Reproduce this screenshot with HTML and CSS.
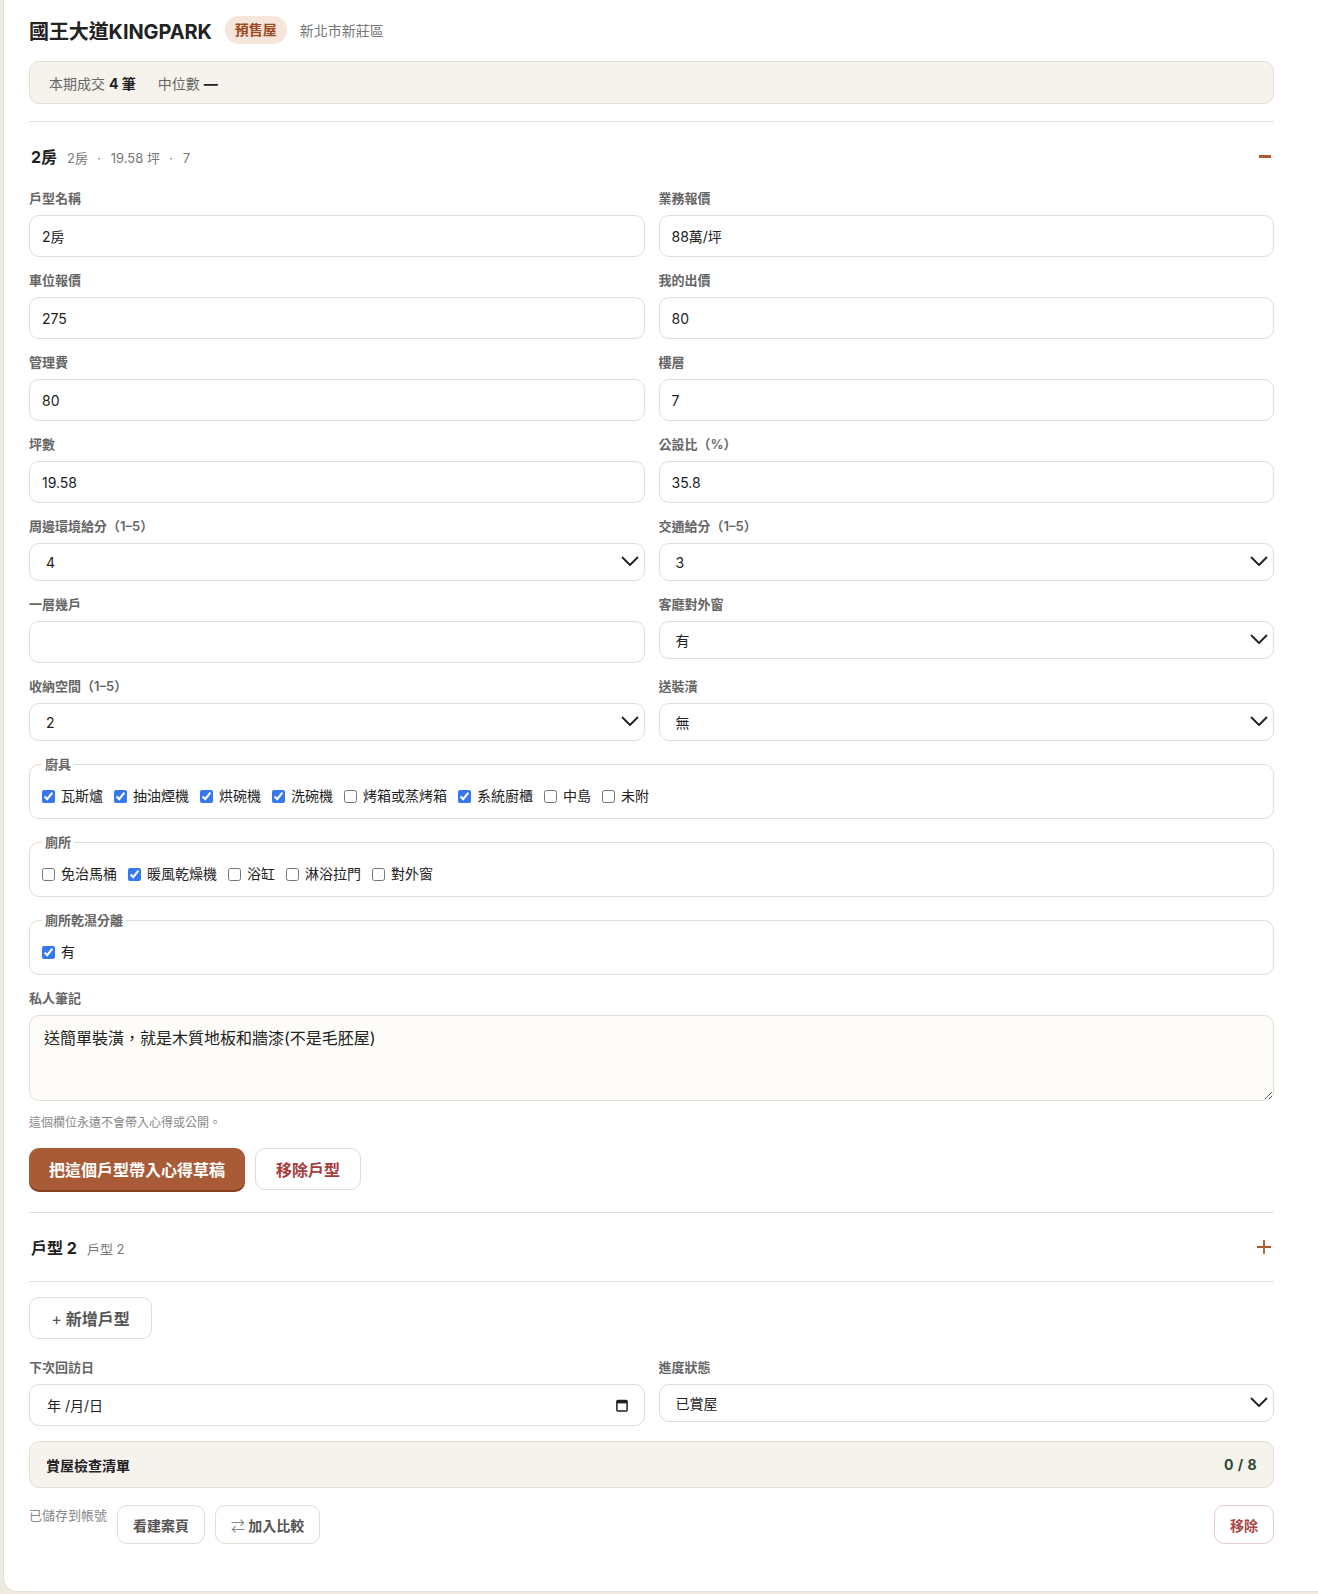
FILE: index.html
```html
<!DOCTYPE html>
<html lang="zh-Hant">
<head>
<meta charset="utf-8">
<title>國王大道KINGPARK</title>
<link rel="stylesheet" href="styles.css">
</head>
<body>
<div class="card">
  <div class="title-row">
    <h1 class="title">國王大道KINGPARK</h1>
    <span class="badge">預售屋</span>
    <span class="district">新北市新莊區</span>
  </div>
  <div class="stats">
    <span>本期成交 <b>4 筆</b></span>
    <span>中位數 <b>—</b></span>
  </div>

  <div class="unit">
    <div class="unit-head">
      <div class="unit-title"><b>2房</b><span class="unit-sub">2房<span class="dot">·</span>19.58 坪<span class="dot">·</span>7</span></div>
      <svg class="toggle" width="14" height="14" viewBox="0 0 14 14"><rect x="1" y="6" width="12" height="3" fill="#b0582e"/></svg>
    </div>
    <div class="unit-body">
      <div class="grid">
        <div class="field"><label class="lbl">戶型名稱</label><input class="inp" value="2房"></div>
        <div class="field"><label class="lbl">業務報價</label><input class="inp" value="88萬/坪"></div>
        <div class="field"><label class="lbl">車位報價</label><input class="inp" value="275"></div>
        <div class="field"><label class="lbl">我的出價</label><input class="inp" value="80"></div>
        <div class="field"><label class="lbl">管理費</label><input class="inp" value="80"></div>
        <div class="field"><label class="lbl">樓層</label><input class="inp" value="7"></div>
        <div class="field"><label class="lbl">坪數</label><input class="inp" value="19.58"></div>
        <div class="field"><label class="lbl">公設比（%）</label><input class="inp" value="35.8"></div>
        <div class="field"><label class="lbl">周邊環境給分（1–5）</label>
          <div class="sel-wrap"><select class="sel"><option>4</option></select>
          <svg class="chev" width="18" height="11" viewBox="0 0 18 11"><path d="M1.5 1.5l7.5 7.5 7.5-7.5" fill="none" stroke="#1f1f1f" stroke-width="1.8" stroke-linecap="round" stroke-linejoin="round"/></svg></div>
        </div>
        <div class="field"><label class="lbl">交通給分（1–5）</label>
          <div class="sel-wrap"><select class="sel"><option>3</option></select>
          <svg class="chev" width="18" height="11" viewBox="0 0 18 11"><path d="M1.5 1.5l7.5 7.5 7.5-7.5" fill="none" stroke="#1f1f1f" stroke-width="1.8" stroke-linecap="round" stroke-linejoin="round"/></svg></div>
        </div>
        <div class="field"><label class="lbl">一層幾戶</label><input class="inp" value=""></div>
        <div class="field"><label class="lbl">客廳對外窗</label>
          <div class="sel-wrap"><select class="sel"><option>有</option></select>
          <svg class="chev" width="18" height="11" viewBox="0 0 18 11"><path d="M1.5 1.5l7.5 7.5 7.5-7.5" fill="none" stroke="#1f1f1f" stroke-width="1.8" stroke-linecap="round" stroke-linejoin="round"/></svg></div>
        </div>
        <div class="field"><label class="lbl">收納空間（1–5）</label>
          <div class="sel-wrap"><select class="sel"><option>2</option></select>
          <svg class="chev" width="18" height="11" viewBox="0 0 18 11"><path d="M1.5 1.5l7.5 7.5 7.5-7.5" fill="none" stroke="#1f1f1f" stroke-width="1.8" stroke-linecap="round" stroke-linejoin="round"/></svg></div>
        </div>
        <div class="field"><label class="lbl">送裝潢</label>
          <div class="sel-wrap"><select class="sel"><option>無</option></select>
          <svg class="chev" width="18" height="11" viewBox="0 0 18 11"><path d="M1.5 1.5l7.5 7.5 7.5-7.5" fill="none" stroke="#1f1f1f" stroke-width="1.8" stroke-linecap="round" stroke-linejoin="round"/></svg></div>
        </div>
      </div>

      <fieldset class="fs">
        <legend>廚具</legend>
        <div class="checks">
          <label class="chk"><input type="checkbox" checked>瓦斯爐</label>
          <label class="chk"><input type="checkbox" checked>抽油煙機</label>
          <label class="chk"><input type="checkbox" checked>烘碗機</label>
          <label class="chk"><input type="checkbox" checked>洗碗機</label>
          <label class="chk"><input type="checkbox">烤箱或蒸烤箱</label>
          <label class="chk"><input type="checkbox" checked>系統廚櫃</label>
          <label class="chk"><input type="checkbox">中島</label>
          <label class="chk"><input type="checkbox">未附</label>
        </div>
      </fieldset>
      <fieldset class="fs">
        <legend>廁所</legend>
        <div class="checks">
          <label class="chk"><input type="checkbox">免治馬桶</label>
          <label class="chk"><input type="checkbox" checked>暖風乾燥機</label>
          <label class="chk"><input type="checkbox">浴缸</label>
          <label class="chk"><input type="checkbox">淋浴拉門</label>
          <label class="chk"><input type="checkbox">對外窗</label>
        </div>
      </fieldset>
      <fieldset class="fs">
        <legend>廁所乾濕分離</legend>
        <div class="checks">
          <label class="chk"><input type="checkbox" checked>有</label>
        </div>
      </fieldset>

      <div class="field notes">
        <label class="lbl">私人筆記</label>
        <textarea class="ta">送簡單裝潢，就是木質地板和牆漆(不是毛胚屋)</textarea>
      </div>
      <p class="hint">這個欄位永遠不會帶入心得或公開。</p>
      <div class="actions">
        <button class="btn-primary">把這個戶型帶入心得草稿</button>
        <button class="btn-outline danger">移除戶型</button>
      </div>
    </div>
  </div>

  <div class="unit collapsed">
    <div class="unit-head">
      <div class="unit-title"><b>戶型 2</b><span class="unit-sub">戶型 2</span></div>
      <svg class="toggle" width="16" height="16" viewBox="0 0 16 16"><path d="M8 1v14M1 8h14" stroke="#b0582e" stroke-width="1.8"/></svg>
    </div>
  </div>

  <button class="btn-outline add"><span class="plus">+</span> 新增戶型</button>

  <div class="grid visit">
    <div class="field"><label class="lbl">下次回訪日</label>
      <div class="date">
        <span>年 /月/日</span>
        <svg width="12" height="13" viewBox="0 0 12 13"><rect x="0.9" y="1.4" width="10.2" height="10.7" rx="1.2" fill="none" stroke="#1f1f1f" stroke-width="1.5"/><rect x="0.9" y="1.4" width="10.2" height="3" fill="#1f1f1f"/></svg>
      </div>
    </div>
    <div class="field"><label class="lbl">進度狀態</label>
      <div class="sel-wrap"><select class="sel"><option>已賞屋</option></select>
      <svg class="chev" width="18" height="11" viewBox="0 0 18 11"><path d="M1.5 1.5l7.5 7.5 7.5-7.5" fill="none" stroke="#1f1f1f" stroke-width="1.8" stroke-linecap="round" stroke-linejoin="round"/></svg></div>
    </div>
  </div>

  <div class="checklist">
    <span>賞屋檢查清單</span>
    <span class="count">0 / 8</span>
  </div>

  <div class="footer">
    <span class="saved">已儲存到帳號</span>
    <button class="btn-outline small">看建案頁</button>
    <button class="btn-outline small"><span class="swap">⇄</span> 加入比較</button>
    <button class="btn-outline small remove">移除</button>
  </div>
</div>
</body>
</html>
```
FILE: styles.css
```css
* { box-sizing: border-box; }
html, body { margin: 0; padding: 0; }
html { background: #efebe2; }
body {
  background: #efebe2;
  font-family: Inter, "Noto Sans CJK TC", "Noto Sans", sans-serif;
  color: #222;
}
.card {
  margin-left: 3px;
  background: #fff;
  border: 1px solid #e4dfd5;
  border-top: none;
  border-right: none;
  border-radius: 0 0 0 14px;
  padding: 14px 44px 47px 25px;
}
.title-row {
  display: flex;
  align-items: center;
  height: 32px;
}
.title {
  margin: 0;
  font-size: 20px;
  font-weight: 700;
  color: #222;
  letter-spacing: -0.1px;
}
.badge {
  margin-left: 13px;
  background: #f6e5da;
  color: #9b4a24;
  font-size: 14px;
  font-weight: 600;
  padding: 4px 10px;
  border-radius: 14px;
  line-height: 20px;
}
.district {
  margin-left: 13px;
  font-size: 14px;
  color: #777;
}
.stats {
  margin-top: 15px;
  height: 43px;
  background: #f6f3ec;
  border: 1px solid #e4dfd3;
  border-radius: 10px;
  display: flex;
  align-items: center;
  gap: 22px;
  padding: 0 19px;
  font-size: 14px;
  color: #666;
}
.stats b { color: #222; font-weight: 700; }

.unit {
  margin-top: 17px;
  border-top: 1px solid #e4e0d6;
}
.unit.collapsed { margin-top: 0; border-bottom: 1px solid #e4e0d6; }
.unit-head {
  height: 68px;
  display: flex;
  align-items: center;
  justify-content: space-between;
  padding: 0 2px;
}
.unit-title { display: flex; align-items: baseline; gap: 10px; }
.unit-title b { font-size: 16px; font-weight: 700; color: #222; }
.unit-sub { font-size: 13px; color: #777; }
.unit-sub .dot { padding: 0 10px 0 9px; }

.unit-body { padding-bottom: 22px; }
.grid {
  display: grid;
  grid-template-columns: 1fr 1fr;
  column-gap: 14px;
  row-gap: 15px;
}
.field { display: flex; flex-direction: column; }
.lbl {
  font-size: 13px;
  font-weight: 600;
  color: #666;
  line-height: 17px;
  margin-bottom: 8px;
}
.inp {
  height: 42px;
  border: 1px solid #e2ddd3;
  border-radius: 10px;
  padding: 0 12px;
  font-family: inherit;
  font-size: 14px;
  color: #222;
  background: #fff;
  outline: none;
}
.sel-wrap { position: relative; }
.sel {
  width: 100%;
  height: 38px;
  appearance: none;
  -webkit-appearance: none;
  border: 1px solid #e2ddd3;
  border-radius: 10px;
  padding: 0 16px;
  font-family: inherit;
  font-size: 14px;
  color: #222;
  background: #fff;
}
.chev {
  position: absolute;
  right: 6px;
  top: 13px;
  pointer-events: none;
}

.fs {
  margin: 15px 0 0;
  border: 1px solid #e2ddd3;
  border-radius: 10px;
  padding: 14px 12px 13px;
  min-width: 0;
}
.fs legend {
  font-size: 13px;
  font-weight: 600;
  color: #666;
  padding: 0 3px;
  line-height: 17px;
}
.checks { display: flex; flex-wrap: wrap; gap: 11px; }
.chk {
  display: flex;
  align-items: center;
  gap: 6px;
  font-size: 14px;
  color: #222;
  line-height: 18px;
}
.chk input {
  margin: 0;
  width: 13px;
  height: 13px;
  accent-color: #3578f0;
}

.notes { margin-top: 15px; }
.ta {
  height: 86px;
  border: 1px solid #e2ddd3;
  border-radius: 10px;
  background: #fdfcf8;
  padding: 11px 14px;
  font-family: inherit;
  font-size: 16px;
  line-height: 22px;
  color: #222;
  resize: vertical;
  outline: none;
}
.hint {
  margin: 14px 0 0;
  font-size: 12px;
  line-height: 16px;
  color: #888;
}
.actions { display: flex; gap: 10px; margin-top: 17px; }
button { font-family: inherit; cursor: pointer; }
.btn-primary {
  height: 42px;
  padding: 0 20px;
  background: #a95b37;
  color: #fff;
  border: none;
  border-radius: 10px;
  font-size: 16px;
  font-weight: 700;
  box-shadow: 0 2px 0 #86401f;
}
.btn-outline {
  height: 42px;
  padding: 0 20px;
  background: #fff;
  border: 1px solid #e2ddd3;
  border-radius: 10px;
  font-size: 16px;
  font-weight: 700;
  color: #555;
}
.btn-outline.danger { color: #a83c3c; }
.btn-outline.add { margin-top: 15px; width: 123px; padding: 0; }
.plus { font-weight: 400; }

.visit { margin-top: 20px; }
.date {
  height: 42px;
  border: 1px solid #e2ddd3;
  border-radius: 10px;
  padding: 0 16px 0 17px;
  display: flex;
  align-items: center;
  justify-content: space-between;
  font-size: 14px;
  color: #222;
}
.checklist {
  margin-top: 15px;
  height: 47px;
  background: #f6f3ec;
  border: 1px solid #e4dfd3;
  border-radius: 10px;
  display: flex;
  align-items: center;
  justify-content: space-between;
  padding: 0 16px 0 16px;
  font-size: 14px;
  font-weight: 700;
  color: #222;
}
.checklist .count { color: #2f4737; letter-spacing: 0.5px; }
.footer {
  margin-top: 17px;
  display: flex;
  align-items: flex-start;
  gap: 10px;
}
.saved {
  font-size: 13px;
  color: #888;
  line-height: 18px;
  margin-top: 1px;
}
.btn-outline.small {
  height: 39px;
  font-size: 14px;
  padding: 0 15px;
}
.swap { font-weight: 400; color: #888; }
.btn-outline.remove {
  margin-left: auto;
  color: #a84848;
  border-color: #e6cccc;
  padding: 0 15px;
}
```
